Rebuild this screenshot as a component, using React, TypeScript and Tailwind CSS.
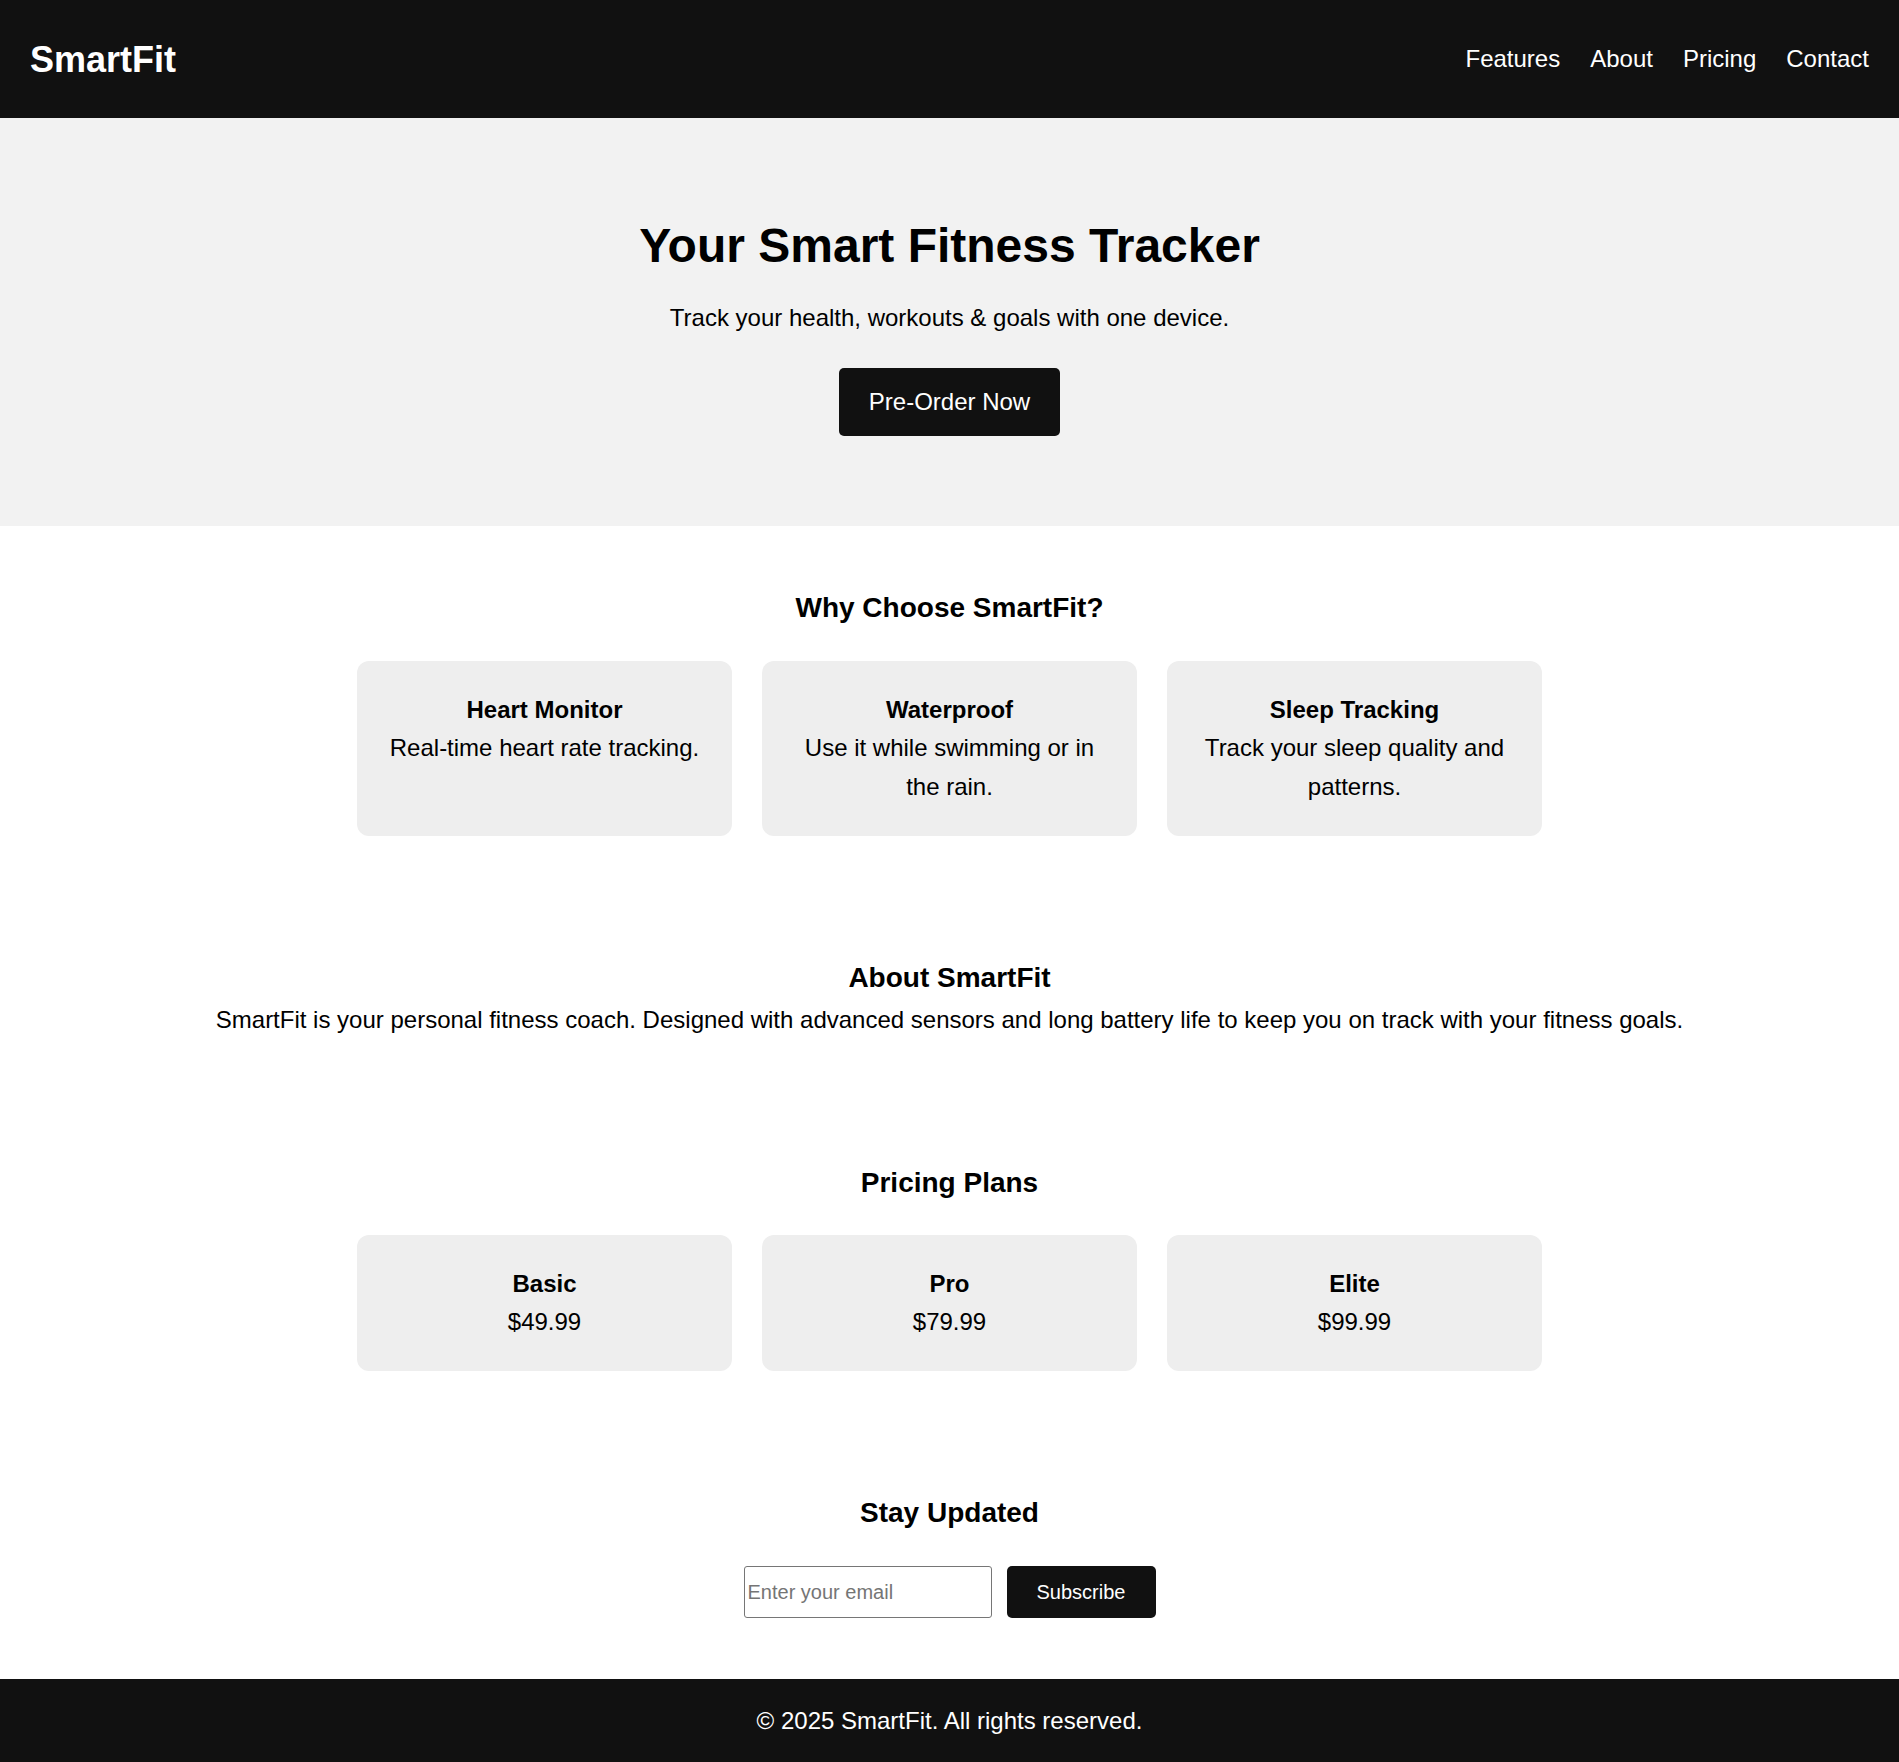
import * as React from "react";

const features = [
  { title: "Heart Monitor", text: "Real-time heart rate tracking." },
  { title: "Waterproof", text: "Use it while swimming or in the rain." },
  { title: "Sleep Tracking", text: "Track your sleep quality and patterns." },
];

const plans = [
  { name: "Basic", price: "$49.99" },
  { name: "Pro", price: "$79.99" },
  { name: "Elite", price: "$99.99" },
];

export default function App() {
  return (
    <div className="min-h-screen bg-white text-black font-['Liberation_Sans',Arial,sans-serif] text-[24px]">
      {/* header */}
      <header className="h-[118px] bg-[#111111] text-white flex items-center justify-between px-[30px]">
        <div className="text-[36px] font-bold leading-[41px]">SmartFit</div>
        <nav className="flex gap-[30px] text-[24px] leading-[28px]">
          <a href="#features">Features</a>
          <a href="#about">About</a>
          <a href="#pricing">Pricing</a>
          <a href="#contact">Contact</a>
        </nav>
      </header>

      {/* hero */}
      <section className="bg-[#f2f2f2] pt-[100px] pb-[90px] flex flex-col items-center text-center">
        <h1 className="text-[48px] font-bold leading-[55px]">Your Smart Fitness Tracker</h1>
        <p className="mt-[26px] leading-[38px]">Track your health, workouts &amp; goals with one device.</p>
        <button className="mt-[31px] bg-[#111111] text-white rounded-[5px] px-[30px] py-[20px] leading-[28px]">
          Pre-Order Now
        </button>
      </section>

      {/* features */}
      <section id="features" className="pt-[65px] flex flex-col items-center text-center">
        <h2 className="text-[28px] font-bold leading-[33px]">Why Choose SmartFit?</h2>
        <div className="mt-[37px] flex gap-[30px]">
          {features.map(f => (
            <div key={f.title} className="w-[375px] bg-[#eeeeee] rounded-[12px] p-[30px] leading-[38.4px]">
              <div className="font-bold">{f.title}</div>
              <div>{f.text}</div>
            </div>
          ))}
        </div>
      </section>

      {/* about */}
      <section id="about" className="pt-[125px] px-[60px] flex flex-col items-center text-center">
        <h2 className="text-[28px] font-bold leading-[33px]">About SmartFit</h2>
        <p className="mt-[7px] leading-[38.4px]">
          SmartFit is your personal fitness coach. Designed with advanced sensors and long battery life to keep you on track with your fitness goals.
        </p>
      </section>

      {/* pricing */}
      <section id="pricing" className="pt-[126px] flex flex-col items-center text-center">
        <h2 className="text-[28px] font-bold leading-[33px]">Pricing Plans</h2>
        <div className="mt-[36px] flex gap-[30px]">
          {plans.map(p => (
            <div key={p.name} className="w-[375px] bg-[#eeeeee] rounded-[12px] p-[30px] leading-[38.4px]">
              <div className="font-bold">{p.name}</div>
              <div>{p.price}</div>
            </div>
          ))}
        </div>
      </section>

      {/* newsletter */}
      <section id="contact" className="pt-[125px] pb-[61px] flex flex-col items-center text-center">
        <h2 className="text-[28px] font-bold leading-[33px]">Stay Updated</h2>
        <div className="mt-[37px] flex gap-[15px]">
          <input
            type="email"
            placeholder="Enter your email"
            className="w-[248px] h-[52px] border border-[#767676] rounded-[3px] px-[3px] text-[20px] placeholder:text-[#757575] outline-none"
          />
          <button className="w-[149px] h-[52px] bg-[#111111] text-white rounded-[5px] text-[20px]">Subscribe</button>
        </div>
      </section>

      {/* footer */}
      <footer className="bg-[#111111] text-white text-center pt-[23px] pb-[22px] leading-[38.4px]">
        © 2025 SmartFit. All rights reserved.
      </footer>
    </div>
  );
}
